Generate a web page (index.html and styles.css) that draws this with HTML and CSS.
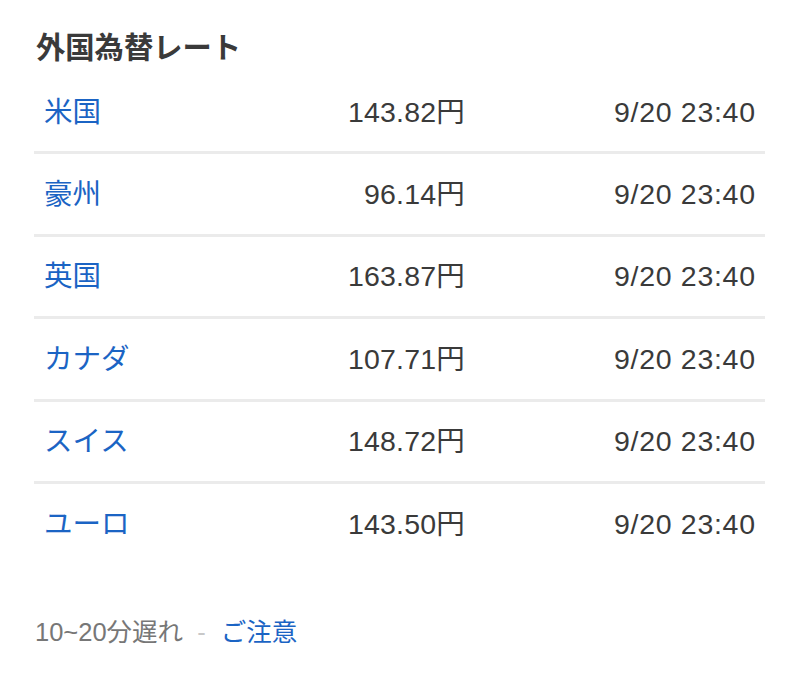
FILE: index.html
```html
<!DOCTYPE html>
<html lang="ja">
<head>
<meta charset="utf-8">
<title>外国為替レート</title>
<link rel="stylesheet" href="styles.css">
</head>
<body>
<section class="fx">
  <h2 class="fx-title">外国為替レート</h2>
  <ul class="fx-list">
    <li class="fx-row"><a class="fx-name" href="#">米国</a><span class="fx-value">143.82円</span><span class="fx-time">9/20 23:40</span></li>
    <li class="fx-row"><a class="fx-name" href="#">豪州</a><span class="fx-value">96.14円</span><span class="fx-time">9/20 23:40</span></li>
    <li class="fx-row"><a class="fx-name" href="#">英国</a><span class="fx-value">163.87円</span><span class="fx-time">9/20 23:40</span></li>
    <li class="fx-row"><a class="fx-name" href="#">カナダ</a><span class="fx-value">107.71円</span><span class="fx-time">9/20 23:40</span></li>
    <li class="fx-row"><a class="fx-name" href="#">スイス</a><span class="fx-value">148.72円</span><span class="fx-time">9/20 23:40</span></li>
    <li class="fx-row"><a class="fx-name" href="#">ユーロ</a><span class="fx-value">143.50円</span><span class="fx-time">9/20 23:40</span></li>
  </ul>
  <p class="fx-note"><span class="fx-delay">10~20分遅れ</span><span class="fx-sep">-</span><a class="fx-link" href="#">ご注意</a></p>
</section>
</body>
</html>
```
FILE: styles.css
```css
html, body {
  margin: 0;
  padding: 0;
  background: #ffffff;
}
body {
  font-family: "Liberation Sans", "Noto Sans CJK JP", sans-serif;
  color: #333333;
}
.fx {
  padding: 30px 33px 0 34px;
}
.fx-title {
  margin: 0;
  padding-left: 2px;
  font-size: 29.3px;
  font-weight: bold;
  line-height: 36px;
  color: #3a3a3a;
}
.fx-list {
  list-style: none;
  margin: 6px 0 0 0;
  padding: 0;
}
.fx-row {
  display: grid;
  grid-template-columns: 1fr 170px 290px;
  align-items: center;
  height: 79.4px;
  padding: 0 10px;
  border-bottom: 3px solid #ebebeb;
  font-size: 28.5px;
  line-height: 40px;
}
.fx-row:last-child {
  border-bottom: none;
}
.fx-name {
  color: #1b64c4;
  text-decoration: none;
}
.fx-value,
.fx-time {
  text-align: right;
  color: #3a3a3a;
}
.fx-value {
  letter-spacing: 0.2px;
}
.fx-time {
  letter-spacing: 0.7px;
  margin-right: -0.7px;
}
.fx-note {
  margin: 54px 0 0 1px;
  font-size: 25.5px;
  line-height: 30px;
  color: #777777;
  display: flex;
  align-items: baseline;
}
.fx-sep {
  color: #c8c8c8;
  margin: 0 15px 0 14px;
}
.fx-link {
  color: #1b64c4;
  text-decoration: none;
}
```
